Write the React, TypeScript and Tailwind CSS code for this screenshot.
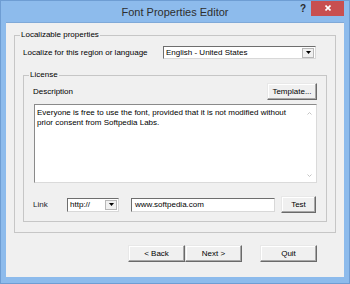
import React from "react";

function Arrow() {
  return (
    <div className="w-[12px] h-[10px] bg-[#f0f0f0] border border-[#b8b8b8] flex items-center justify-center shrink-0">
      <svg width="5" height="3" viewBox="0 0 5 3"><path d="M0 0H5L2.5 3Z" fill="#000" /></svg>
    </div>
  );
}

function Btn({ children, w }: { children: React.ReactNode; w: string }) {
  return (
    <div
      className={`${w} h-[17px] bg-[#f0f0f0] border border-t-[#e8e8e8] border-l-[#e8e8e8] border-r-[#6a6a6a] border-b-[#6a6a6a] shadow-[inset_-1px_-1px_0_#a8a8a8,inset_1px_1px_0_#ffffff] flex items-center justify-center text-[8px] text-black`}
    >
      {children}
    </div>
  );
}

export default function App() {
  return (
    <div className="w-[350px] h-[284px] bg-[#8dbbec] border border-[#6e9dd3] flex flex-col font-['Liberation_Sans',Arial,sans-serif] text-[8px] leading-[10px] text-black overflow-hidden">
      <div className="relative h-[21px] shrink-0 flex items-center justify-center">
        <span className="text-[11px] leading-[13px] text-[#2e2e2e] mt-[2px]">Font Properties Editor</span>
        <span className="absolute left-[299px] top-[2px] text-[10px] leading-[12px] font-bold text-[#2a2a2a]">?</span>
        <div className="absolute left-[310px] top-[-1px] w-[33px] h-[16px] bg-[#c84f50] flex items-center justify-center">
          <svg width="6" height="6" viewBox="0 0 6 6">
            <path d="M0.5 0.5L5.5 5.5M5.5 0.5L0.5 5.5" stroke="#fff" strokeWidth="1.6" />
          </svg>
        </div>
      </div>
      <div className="mx-[5px] mb-[6px] flex-1 bg-[#f0f0f0] border-t border-[#7fa9d8] flex flex-col">
        <fieldset className="mt-[7px] mx-[8px] border border-[#c6c6c6]">
          <legend className="ml-[5px] px-[1px] text-[8px] leading-[10px]">Localizable properties</legend>
          <div className="pl-[8px] pr-[8px] pb-[10px]">
            <div className="flex items-center mt-[6px]">
              <span className="w-[140px]">Localize for this region or language</span>
              <div className="w-[153px] h-[13px] bg-white border border-t-[#6e6e6e] border-l-[#6e6e6e] border-r-[#d8d8d8] border-b-[#d8d8d8] flex items-center pl-[2px] pr-[1px]">
                <span className="flex-1">English - United States</span>
                <Arrow />
              </div>
            </div>
            <fieldset className="mt-[11px] border border-[#c6c6c6]">
              <legend className="ml-[5px] px-[1px] text-[8px] leading-[10px]">License</legend>
              <div className="pl-[10px] pr-[9px] pb-[8px]">
                <div className="flex items-center justify-between mt-[3px]">
                  <span className="-ml-[1px]">Description</span>
                  <Btn w="w-[50px]">Template...</Btn>
                </div>
                <div className="mt-[4px] h-[79px] bg-white border border-t-[#8a8a8a] border-l-[#8a8a8a] border-r-[#dadada] border-b-[#dadada] flex">
                  <div className="flex-1 pl-[2px] pt-[3px] leading-[10px] text-[8px]">
                    Everyone is free to use the font, provided that it is not modified without prior consent from Softpedia Labs.
                  </div>
                  <div className="w-[13px] flex flex-col items-center justify-between pt-[7px] pb-[5px]">
                    <svg width="5" height="3" viewBox="0 0 5 3"><path d="M0.5 2.5L2.5 0.5L4.5 2.5" stroke="#c4c4c4" fill="none" /></svg>
                    <svg width="5" height="3" viewBox="0 0 5 3"><path d="M0.5 0.5L2.5 2.5L4.5 0.5" stroke="#c4c4c4" fill="none" /></svg>
                  </div>
                </div>
                <div className="flex items-center mt-[13px]">
                  <span className="w-[34px] -ml-[1px] text-[#1a1a2a]">Link</span>
                  <div className="w-[52px] h-[14px] bg-white border border-t-[#6e6e6e] border-l-[#6e6e6e] border-r-[#d8d8d8] border-b-[#d8d8d8] flex items-center pl-[2px] pr-[1px]">
                    <span className="flex-1">http://</span>
                    <Arrow />
                  </div>
                  <div className="ml-[12px] w-[144px] h-[14px] bg-white border border-t-[#6e6e6e] border-l-[#6e6e6e] border-r-[#d8d8d8] border-b-[#d8d8d8] flex items-center pl-[3px]">
                    www.softpedia.com
                  </div>
                  <div className="ml-[6px]">
                    <Btn w="w-[35px]">Test</Btn>
                  </div>
                </div>
              </div>
            </fieldset>
          </div>
        </fieldset>
        <div className="flex justify-end mt-[12px] pr-[27px]">
          <Btn w="w-[57px]">&lt; Back</Btn>
          <Btn w="w-[57px]">Next &gt;</Btn>
          <div className="ml-[18px]">
            <Btn w="w-[57px]">Quit</Btn>
          </div>
        </div>
      </div>
    </div>
  );
}
